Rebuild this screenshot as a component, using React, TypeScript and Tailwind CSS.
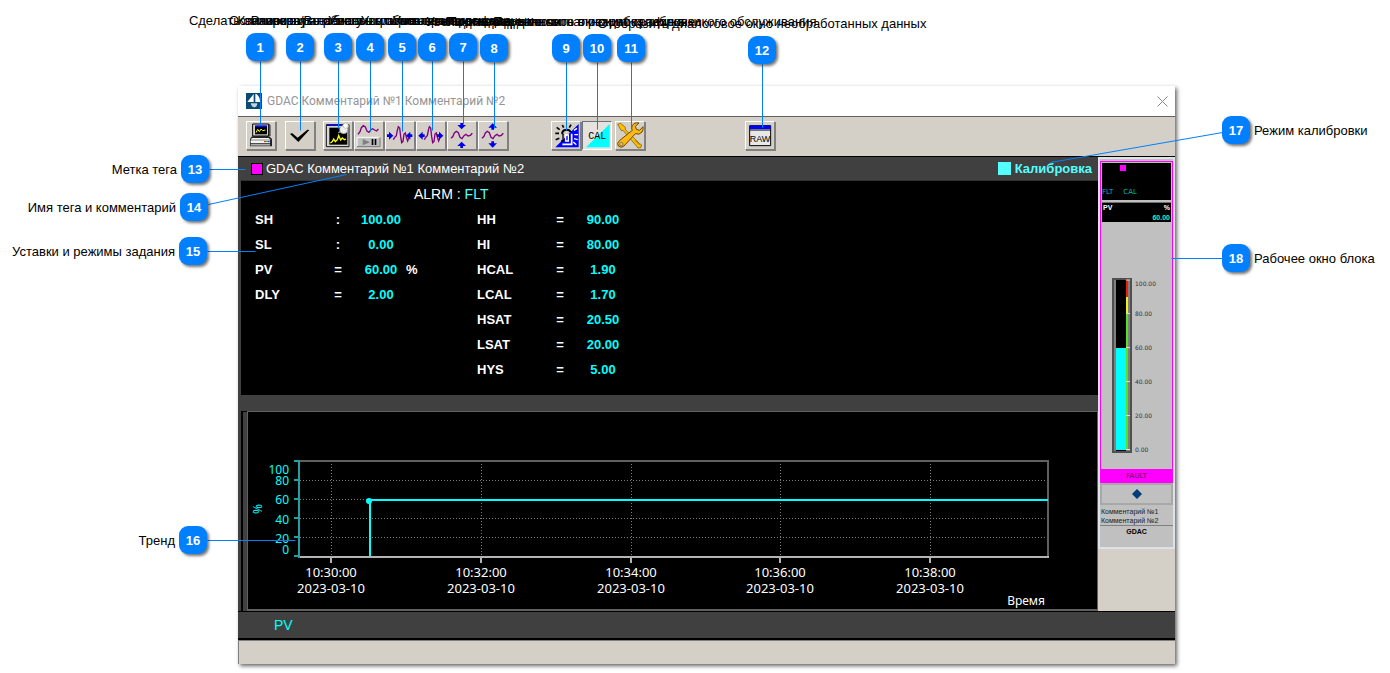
import React from "react";

interface Callout {
  id: number;
  label: string;
  x: number;
  y: number;
  side: "top" | "left" | "right";
  // Where the pointer starts (badge edge) and ends (pointed item)
  line: [number, number, number, number];
}

const CALLOUTS: Callout[] = [
  { id: 1, label: "Сделать снимок экрана", x: 260, y: 47, side: "top", line: [260, 61, 260, 125] },
  { id: 2, label: "Квитировать тревогу", x: 300, y: 47, side: "top", line: [300, 61, 300, 130] },
  { id: 3, label: "Развернуть область графика", x: 338, y: 47, side: "top", line: [338, 61, 338, 128] },
  { id: 4, label: "Остановить/Возобновить обновление графика", x: 370, y: 47, side: "top", line: [370, 61, 370, 131] },
  { id: 5, label: "Уменьшить ось времени", x: 402, y: 47, side: "top", line: [402, 61, 402, 131] },
  { id: 6, label: "Увеличить ось времени", x: 432, y: 47, side: "top", line: [432, 61, 432, 130] },
  { id: 7, label: "Уменьшить ось данных", x: 463, y: 47, side: "top", line: [463, 61, 463, 124] },
  { id: 8, label: "Увеличить ось данных", x: 494, y: 48, side: "top", line: [494, 62, 494, 128] },
  { id: 9, label: "Подтверждение сигнализации графика", x: 566, y: 48, side: "top", line: [566, 62, 566, 130] },
  { id: 10, label: "Переключить в режим калибровки", x: 597, y: 48, side: "top", line: [597, 62, 597, 129] },
  { id: 11, label: "Показать диалоговое окно работ технического обслуживания", x: 631, y: 48, side: "top", line: [631, 62, 631, 129] },
  { id: 12, label: "Отобразить диалоговое окно необработанных данных", x: 762, y: 50, side: "top", line: [762, 64, 762, 127] },
  { id: 13, label: "Метка тега", x: 195, y: 169, side: "left", line: [209, 169, 245, 169] },
  { id: 14, label: "Имя тега и комментарий", x: 194, y: 207, side: "left", line: [208, 204, 346, 174] },
  { id: 15, label: "Уставки и режимы задания", x: 193, y: 251, side: "left", line: [207, 251, 255, 251] },
  { id: 16, label: "Тренд", x: 193, y: 540, side: "left", line: [207, 540, 295, 540] },
  { id: 17, label: "Режим калибровки", x: 1236, y: 130, side: "right", line: [1222, 132, 1050, 162] },
  { id: 18, label: "Рабочее окно блока", x: 1236, y: 258, side: "right", line: [1222, 258, 1171, 258] },
];

const LABEL_CLASS = {
  top: "absolute bottom-full left-1/2 mb-[5px] -translate-x-1/2",
  left: "absolute right-full top-1/2 mr-1 -translate-y-1/2",
  right: "absolute left-full top-1/2 ml-1 -translate-y-1/2",
};

interface Param {
  name: string;
  sign: string;
  value: string;
  unit?: string;
}

const SETPOINTS: Param[] = [
  { name: "SH", sign: ":", value: "100.00" },
  { name: "SL", sign: ":", value: "0.00" },
  { name: "PV", sign: "=", value: "60.00", unit: "%" },
  { name: "DLY", sign: "=", value: "2.00" },
];

const LIMITS: Param[] = [
  { name: "HH", sign: "=", value: "90.00" },
  { name: "HI", sign: "=", value: "80.00" },
  { name: "HCAL", sign: "=", value: "1.90" },
  { name: "LCAL", sign: "=", value: "1.70" },
  { name: "HSAT", sign: "=", value: "20.50" },
  { name: "LSAT", sign: "=", value: "20.00" },
  { name: "HYS", sign: "=", value: "5.00" },
];

const ParamTable: React.FC<{ rows: Param[] }> = ({ rows }) => (
  <table className="h-fit table-fixed text-[13px] font-bold text-white">
    <tbody>
      {rows.map((p) => (
        <tr key={p.name} className="h-[25px]">
          <th scope="row" className="w-[73px] text-left">{p.name}</th>
          <td className="w-5 text-center">{p.sign}</td>
          <td className="w-[58px] pl-2 text-center text-[#00ffff]">{p.value}</td>
          <td className="w-[71px] text-left">{p.unit}</td>
        </tr>
      ))}
    </tbody>
  </table>
);

/* Toolbar icons, all on one 84x81 drawing area */

const Icon: React.FC<{ children: React.ReactNode }> = ({ children }) => (
  <svg viewBox="3 3 84 81" className="h-[27px] w-7" aria-hidden="true">
    {children}
  </svg>
);

const ScreenshotIcon = () => (
  <Icon>
    <path d="M22 9h48l4 4v32h-8v6H24z" fill="#555" />
    <path d="M20 9h48v36H20z" fill="#d8d4cc" stroke="#000" strokeWidth="3" />
    <path d="M27 15h36v25H27z" fill="#000" />
    <path d="M27 13h36v5H27z" fill="#0000ff" />
    <path d="M30 35l5-10 5 7 5-8 5 5 8-2" fill="none" stroke="#ff0" strokeWidth="3" />
    <path d="M18 46h52l8 8v22H12V54z" fill="#222" />
    <path d="M18 51h50l6 5H14zM14 58h58v8H14z" fill="#f4f4f0" />
    <path d="M14 68h58v6H14z" fill="#aaa" />
    <path d="M54 62h6" stroke="#f00" strokeWidth="3" />
    <path d="M60 62h6" stroke="#0c0" strokeWidth="3" />
    <path d="M66 62h5" stroke="#00f" strokeWidth="3" />
  </Icon>
);

const AckIcon = () => (
  <Icon>
    <path d="M15 39l6-3 17 14 29-24 6 1-33 36z" fill="#000" />
  </Icon>
);

const TrendPinIcon = () => (
  <Icon>
    <path d="M10 11h68v66H10z" fill="#d8d8d8" stroke="#111" strokeWidth="3" />
    <path d="M12 13h46" stroke="#00f" strokeWidth="4" />
    <path d="M19 20h54v51H19z" fill="#000" />
    <path d="M22 66l6-4 4-8 5 8 6-6 4-12 6 13 5-6 6 5 5-2" fill="none" stroke="#ff0" strokeWidth="4" />
    <path d="M46 36l12-10" stroke="#999" strokeWidth="4" />
    <circle cx="62" cy="26" r="12" fill="#eee" stroke="#999" strokeWidth="2" />
    <circle cx="68" cy="14" r="8" fill="#fff" stroke="#aaa" strokeWidth="2" />
  </Icon>
);

const PauseIcon = () => (
  <Icon>
    <path d="M12 40l6-8 4-12 6-6 6 4 5 12 6 4 6-8 5-3 6 4 6 3 5-6" fill="none" stroke="#800080" strokeWidth="4" />
    <path d="M9 49h69v28H9z" fill="#c0c0c0" />
    <path d="M9 77V49h69" fill="none" stroke="#fff" strokeWidth="3" />
    <path d="M9 77h69V49" fill="none" stroke="#777" strokeWidth="3" />
    <path d="M26 54l22 10-22 9z" fill="#808080" />
    <path d="M53 54h5v18h-5zM62 54h5v18h-5z" fill="#000" />
  </Icon>
);

const TIME_WAVE = "M25 56l5-8 4-4 3-16 3-11 4 4 3 26 3 18 4-4 3-22 4-3 3 12 4 12 3-8";
const DATA_WAVE = "M12 52l6-6 4-10 6-5 6 4 5 14 6 4 6-9 6-4 6 5 7-2 6-6";

const TimeShrinkIcon = () => (
  <Icon>
    <path d={TIME_WAVE} fill="none" stroke="#800080" strokeWidth="4" />
    <path d="M6 40h6v-8l13 12-13 12v-8H6zM82 40h-6v-8L63 44l13 12v-8h6z" fill="#0000e8" />
  </Icon>
);

const TimeGrowIcon = () => (
  <Icon>
    <path d={TIME_WAVE} fill="none" stroke="#800080" strokeWidth="4" />
    <path d="M26 40h-6v-8L7 44l13 12v-8h6zM63 40h6v-8l13 12-13 12v-8h-6z" fill="#0000e8" />
  </Icon>
);

const DataShrinkIcon = () => (
  <Icon>
    <path d={DATA_WAVE} fill="none" stroke="#800080" strokeWidth="4" />
    <path d="M40 6h8v6h9L44 25 31 12h9zM40 81h8v-6h9L44 62 31 75h9z" fill="#0000e8" />
  </Icon>
);

const DataGrowIcon = () => (
  <Icon>
    <path d={DATA_WAVE} fill="none" stroke="#800080" strokeWidth="4" />
    <path d="M40 26h8v-6h9L44 7 31 20h9zM40 61h8v6h9L44 80 31 67h9z" fill="#0000e8" />
  </Icon>
);

const AlarmOffIcon = () => (
  <Icon>
    <path d="M83 9v70H13z" fill="#0000ff" />
    <path d="M34 40v-6q3-8 13-8t12 8" fill="none" stroke="#000" strokeWidth="6" />
    <path d="M36 38v20M30 60h8" stroke="#000" strokeWidth="4" />
    <path d="M34 70h28V38" fill="none" stroke="#fff" strokeWidth="5" />
    <path d="M44 42h8v18h-8z" fill="none" stroke="#fff" strokeWidth="4" />
    <path d="M17 19l9 7M13 37h11M14 56l11-4M34 12l4 8M60 11l-5 9" stroke="#000" strokeWidth="5" />
    <path d="M69 28l9-6M70 41h11M69 53l11 3M67 63l9 8" stroke="#fff" strokeWidth="4" />
  </Icon>
);

const CalIcon = () => (
  <Icon>
    <path d="M83 9v70H12z" fill="#00ffff" />
    <text x="46" y="54" textAnchor="middle" fontSize="30" className="font-['Liberation_Mono']">
      CAL
    </text>
  </Icon>
);

const ToolsIcon = () => (
  <Icon>
    <path d="M8 10l9-3 14 12v7l43 42 6 4-3 8-8 1-7-9-37-43-7-1z" fill="#ffc000" stroke="#6b4a00" strokeWidth="2" />
    <path
      d="M72 6q-14-3-20 8-4 8 0 14L13 59q-9 8-3 16 8 8 17 0l34-37q12 5 20-5 5-7 3-16L74 28l-10-3-3-9z"
      fill="#fdb813"
      stroke="#6b4a00"
      strokeWidth="3"
    />
    <circle cx="19" cy="69" r="5" fill="#d4d0c8" stroke="#6b4a00" strokeWidth="2" />
    <path d="M60 58l14 14" stroke="#a87400" strokeWidth="3" />
  </Icon>
);

const RawIcon = () => (
  <Icon>
    <path d="M14 14h63v60H14z" fill="#e8e8e8" stroke="#000" strokeWidth="3" />
    <path d="M14 14h63v10H14z" fill="#0000ff" />
    <path d="M15 27h61" stroke="#000" strokeWidth="3" />
    <text x="45" y="63" textAnchor="middle" fontSize="27" className="font-['Liberation_Sans']">
      RAW
    </text>
  </Icon>
);

interface ToolButtonProps {
  title: string;
  pressed?: boolean;
  className?: string;
  children: React.ReactNode;
}

const ToolButton: React.FC<ToolButtonProps> = ({ title, pressed = false, className = "", children }) => (
  <button
    type="button"
    aria-label={title}
    aria-pressed={pressed}
    className={`h-[29px] w-[30px] shrink-0 border ${
      pressed
        ? "border-t-gray-500 border-l-gray-500 border-r-white border-b-white bg-[#e6e3de]"
        : "border-t-white border-l-white border-r-[#808080] border-b-[#808080] bg-[#d4d0c8] shadow-[1px_1px_0_#808080]"
    } ${className}`}
  >
    {children}
  </button>
);

const Toolbar = () => (
  <div className="flex h-10 items-start border-t border-[#606060] bg-[#d4d0c8] pl-2 pt-1">
    <ToolButton title="Снимок экрана"><ScreenshotIcon /></ToolButton>
    <ToolButton title="Квитировать" className="ml-[9px]"><AckIcon /></ToolButton>
    <div className="ml-2 flex gap-px">
      <ToolButton title="Тренд"><TrendPinIcon /></ToolButton>
      <ToolButton title="Пауза"><PauseIcon /></ToolButton>
      <ToolButton title="Уменьшить ось времени"><TimeShrinkIcon /></ToolButton>
      <ToolButton title="Увеличить ось времени"><TimeGrowIcon /></ToolButton>
      <ToolButton title="Уменьшить ось данных"><DataShrinkIcon /></ToolButton>
      <ToolButton title="Увеличить ось данных"><DataGrowIcon /></ToolButton>
    </div>
    <div className="ml-[43px] flex gap-px">
      <ToolButton title="Подавить сигнализацию"><AlarmOffIcon /></ToolButton>
      <ToolButton title="Калибровка" pressed><CalIcon /></ToolButton>
    </div>
    <ToolButton title="Обслуживание" className="ml-[3px]"><ToolsIcon /></ToolButton>
    <ToolButton title="Необработанные данные" className="ml-[100px]"><RawIcon /></ToolButton>
  </div>
);

const X_TICKS = [
  { x: 83, time: "10:30:00" },
  { x: 233, time: "10:32:00" },
  { x: 383, time: "10:34:00" },
  { x: 532, time: "10:36:00" },
  { x: 682, time: "10:38:00" },
];

const Y_TICKS = [
  { y: 49, label: "100", labelY: 62 },
  { y: 68, label: "80", labelY: 73 },
  { y: 87, label: "60", labelY: 92 },
  { y: 106, label: "40", labelY: 112 },
  { y: 125, label: "20", labelY: 131 },
  { y: 144, label: "0", labelY: 142 },
];

const TrendChart = () => (
  <svg viewBox="0 0 849 197" className="block w-full bg-black font-['Noto_Sans',sans-serif] text-[12px]">
    <g stroke="#7a7a7a" strokeDasharray="1 2" fill="none">
      {Y_TICKS.map((t) => (
        <path key={t.label} d={`M52 ${t.y}.5H800`} />
      ))}
      {X_TICKS.map((t) => (
        <path key={t.time} d={`M${t.x}.5 49V144`} />
      ))}
    </g>
    <path d="M52 49H800V145" fill="none" stroke="#606060" strokeWidth="2" />
    <path d="M51 145H801" stroke="#b4b4b4" strokeWidth="2" />
    <path d="M51 48V146" stroke="#20a0a0" strokeWidth="2" />
    {Y_TICKS.map((t) => (
      <g key={t.label}>
        <path d={`M46 ${t.y}H51`} stroke="#20a0a0" strokeWidth="2" />
        <text x="41" y={t.labelY} textAnchor="end" fill="#00ffff">{t.label}</text>
      </g>
    ))}
    <text transform="translate(14 97) rotate(-90)" textAnchor="middle" fill="#00ffff">%</text>
    {X_TICKS.map((t) => (
      <g key={t.time} fill="#fff" textAnchor="middle" className="text-[13px]">
        <path d={`M${t.x} 146v5`} stroke="#b4b4b4" strokeWidth="2" />
        <text x={t.x} y="165">{t.time}</text>
        <text x={t.x} y="181">2023-03-10</text>
      </g>
    ))}
    <text x="797" y="193" textAnchor="end" fill="#fff">Время</text>
    <path d="M122 144V88H800" fill="none" stroke="#00ffff" strokeWidth="2" />
    <circle cx="121" cy="89" r="3" fill="#00ffff" />
  </svg>
);

const GAUGE_TICKS = [
  { y: 6, label: "100.00" },
  { y: 36, label: "80.00" },
  { y: 70, label: "60.00" },
  { y: 104, label: "40.00" },
  { y: 138, label: "20.00" },
  { y: 172, label: "0.00" },
];

const Gauge = () => (
  <svg viewBox="0 0 69 176" className="block w-full font-['DejaVu_Sans',sans-serif] text-[6px]">
    <rect x="11" y="1" width="18" height="173" fill="#808080" stroke="#505050" strokeWidth="2" />
    <rect x="14" y="2" width="10" height="171" fill="#000" />
    <rect x="14" y="70" width="10" height="102" fill="#00ffff" />
    <rect x="24" y="2" width="2" height="17" fill="#f02000" />
    <rect x="24" y="19" width="2" height="17" fill="#f0f020" />
    <rect x="24" y="36" width="2" height="136" fill="#58e020" />
    {GAUGE_TICKS.map((t) => (
      <g key={t.label}>
        <path d={`M24 ${t.y === 6 ? 2 : t.y - 0.5}h4`} stroke="#ddd" />
        <text x="33" y={t.y + 2} fill="#333">{t.label}</text>
      </g>
    ))}
  </svg>
);

const Faceplate = () => (
  <aside className="w-[77px] shrink-0 bg-[#d4d0c8]">
    <div className="border-2 border-[#dce2e8] bg-[#c0c0c0] pt-0.5 font-['Liberation_Sans']">
      <div className="border border-b-0 border-[#ff00ff] p-px">
        <div className="h-[37px] bg-black pt-0.5 text-[7px] text-[#00b8b8]">
          <div className="ml-[18px] size-1.5 bg-[#ff00ff]" />
          <div className="mt-4 flex gap-2.5 font-['DejaVu_Sans']">
            <span>FLT</span>
            <span>CAL</span>
          </div>
        </div>
        <div className="mt-0.5 flex h-5 flex-col justify-between border-t border-[#707070] bg-black px-px text-[7px] leading-[9px] font-bold">
          <div className="flex justify-between text-white">
            <span>PV</span>
            <span>%</span>
          </div>
          <div className="text-right text-[#00ffc8]">60.00</div>
        </div>
        <div className="pt-[56px] pb-3.5">
          <Gauge />
        </div>
      </div>
      <div className="bg-[#ff00ff] text-center text-[7px] leading-[14px] text-[#600060] font-['DejaVu_Sans']">FAULT</div>
      <button type="button" aria-label="Режим" className="flex h-[22px] w-full items-center justify-center border-2 border-[#a8a8a8]">
        <svg viewBox="0 0 10 10" className="size-2.5" aria-hidden="true">
          <path d="M5 0l5 5-5 5-5-5z" fill="#003c78" />
        </svg>
      </button>
      <div className="mt-0.5 border-b border-[#808080] pl-px text-[7px] leading-[9px] whitespace-nowrap text-[#222]">
        <p>Комментарий №1</p>
        <p>Комментарий №2</p>
      </div>
      <p className="h-[21px] text-center text-[7px] leading-[11px] font-bold">GDAC</p>
    </div>
  </aside>
);

const TuningWindow = () => (
  <main className="bg-[#d4d0c8] shadow-[2px_2px_4px_rgba(0,0,0,0.6)]">
    <header className="flex h-[30px] items-center justify-between bg-white pl-2 pr-[7px]">
      <div className="flex items-center gap-[5px]">
        <svg viewBox="0 0 48 48" className="size-4" aria-hidden="true">
          <path d="M0 0h48v48H0z" fill="#0c4a74" />
          <path d="M4 27L23 3v24zM28 3h3q10 6 12 24H28z" fill="#fff" />
          <path d="M14 31h20q-1 12-9 12t-11-12z" fill="#c4d3de" />
        </svg>
        <h1 className="text-[12px] text-[#959595] font-['Roboto',sans-serif]">GDAC Комментарий №1 Комментарий №2</h1>
      </div>
      <button type="button" aria-label="Закрыть">
        <svg viewBox="0 0 11 11" className="size-[11px]" aria-hidden="true">
          <path d="M.5.5l10 10M10.5.5l-10 10" stroke="#888" />
        </svg>
      </button>
    </header>

    <Toolbar />

    <div className="flex border-t border-black">
      <div className="min-w-0 grow border-l-3 border-[#404040] bg-[#404040]">
        <div className="flex h-6 items-center justify-between border-b border-[#303030] pl-[10px] pr-1.5">
          <div className="flex items-center gap-[3px]">
            <span className="size-3 border border-black bg-[#ff00ff]" />
            <h2 className="text-[13px] text-white">GDAC Комментарий №1 Комментарий №2</h2>
          </div>
          <div className="flex items-center gap-1 text-[13px] font-bold text-[#54ffff]">
            <span className="size-[13px] bg-[#54ffff]" />
            Калибровка
          </div>
        </div>

        <section className="h-[214px] bg-black pl-3.5">
          <p className="pt-px pb-px pl-[159px] text-[14px] leading-6 text-white">
            ALRM : <span className="text-[#54ffff]">FLT</span>
          </p>
          <div className="flex">
            <ParamTable rows={SETPOINTS} />
            <ParamTable rows={LIMITS} />
          </div>
        </section>

        <section className="mt-4 flex">
          <div className="w-1.5 shrink-0 border-l-2 border-t border-black" />
          <div className="grow border border-b-2 border-[#606060]">
            <TrendChart />
          </div>
        </section>
      </div>

      <Faceplate />
    </div>

    <footer>
      <div className="h-[29px] border-t border-b-2 border-black bg-[#404040] pl-9 text-[14px] leading-[27px] text-[#00ffff]">PV</div>
      <div className="h-[24px] border-l border-t border-[#808080] bg-[#d4d0c8]" />
    </footer>
  </main>
);

const CalloutLayer = () => (
  <div className="absolute top-0 left-0 size-0 text-[13px] leading-[15px] text-black">
    <svg width="1390" height="673" className="pointer-events-none absolute top-0 left-0 max-w-none" aria-hidden="true">
      {CALLOUTS.map(({ id, line: [x1, y1, x2, y2] }) => (
        <path key={id} d={`M${x1} ${y1}L${x2} ${y2}`} transform="translate(.5 .5)" stroke="#0080ff" />
      ))}
    </svg>
    {CALLOUTS.map((c) => (
      <div key={c.id} className="absolute size-7 -translate-x-1/2 -translate-y-1/2" style={{ left: c.x, top: c.y }}>
        <span className="flex size-7 items-center justify-center rounded-[9px] bg-[#0080ff] font-bold text-white shadow-[2px_2px_3px_rgba(0,0,0,0.55)]">
          {c.id}
        </span>
        <span className={`${LABEL_CLASS[c.side]} whitespace-nowrap`}>{c.label}</span>
      </div>
    ))}
  </div>
);

const App: React.FC = () => (
  <div className="relative min-h-screen overflow-hidden bg-white pt-[86px] pr-[215px] pl-[238px] font-['Liberation_Sans',Arial,sans-serif]">
    <TuningWindow />
    <CalloutLayer />
  </div>
);

export default App;
